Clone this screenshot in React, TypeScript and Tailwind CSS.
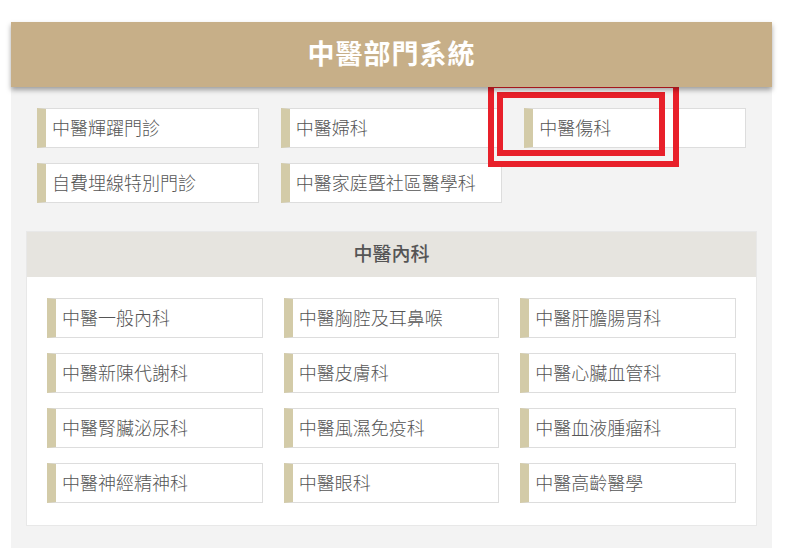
const topItems = ['中醫輝躍門診', '中醫婦科', '中醫傷科', '自費埋線特別門診', '中醫家庭暨社區醫學科']

const internalItems = [
  '中醫一般內科',
  '中醫胸腔及耳鼻喉',
  '中醫肝膽腸胃科',
  '中醫新陳代謝科',
  '中醫皮膚科',
  '中醫心臟血管科',
  '中醫腎臟泌尿科',
  '中醫風濕免疫科',
  '中醫血液腫瘤科',
  '中醫神經精神科',
  '中醫眼科',
  '中醫高齡醫學',
]

function DeptLink({ label }: { label: string }) {
  return (
    <a
      href="#"
      className="flex h-[40px] items-center border border-[#dddddd] border-l-[9px] border-l-[#d3cba8] bg-white pb-[2px] pl-[6px] text-[18px] font-light text-[#555555]"
    >
      {label}
    </a>
  )
}

export default function App() {
  return (
    <div
      className="relative min-h-[548px] bg-white pt-[22px]"
      style={{ fontFamily: '"Noto Sans CJK TC", "Noto Sans", sans-serif' }}
    >
      <div className="mx-[11px] w-[761px] bg-[#f3f3f3] pb-[30px]">
        {/* Header */}
        <div className="relative z-10 flex h-[65px] items-center justify-center bg-[#c7af88] shadow-[0_3px_5px_rgba(0,0,0,0.35)]">
          <h1 className="pb-[2px] text-[27px] font-bold tracking-[1px] text-white">中醫部門系統</h1>
        </div>

        {/* Top links */}
        <div className="grid grid-cols-3 gap-x-[22px] gap-y-[15px] px-[26px] pt-[21px]">
          {topItems.map((item) => (
            <DeptLink key={item} label={item} />
          ))}
        </div>

        {/* Internal medicine */}
        <div className="mx-[15px] mt-[28px] border border-[#e8e8e8] bg-white">
          <div className="flex h-[45px] items-center justify-center bg-[#e6e4df]">
            <h2 className="pb-[2px] text-[19px] font-medium text-[#555555]">中醫內科</h2>
          </div>
          <div className="grid grid-cols-3 gap-x-[21px] gap-y-[15px] px-[20px] pb-[22px] pt-[21px]">
            {internalItems.map((item) => (
              <DeptLink key={item} label={item} />
            ))}
          </div>
        </div>
      </div>

      {/* annotation boxes */}
      <div className="pointer-events-none absolute left-[488px] top-[82px] h-[85px] w-[191px] border-[6px] border-[#e8202a]" />
      <div className="pointer-events-none absolute left-[497px] top-[92px] h-[64px] w-[168px] border-[6px] border-[#e8202a]" />
    </div>
  )
}
